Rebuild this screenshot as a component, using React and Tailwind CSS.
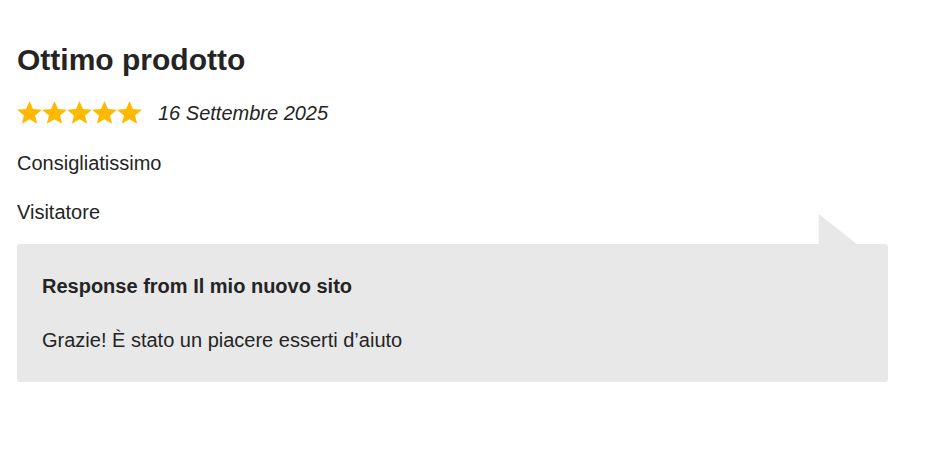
function Star() {
    return (
        <svg width="25" height="23" viewBox="2 0 96 91" preserveAspectRatio="none" className="block">
            <polygon
                fill="#ffb900"
                points="50,0 63.23,31.8 97.55,34.55 71.4,56.95 79.39,90.45 50,72.5 20.61,90.45 28.6,56.95 2.45,34.55 36.77,31.8"
            />
        </svg>
    );
}

export default function App() {
    return (
        <div className="min-h-[453px] bg-white text-[#242424] font-['Liberation_Sans',Arial,sans-serif]">
            <div className="pl-[17px] pt-[42px] w-[888px]">
                <h2 className="text-[30px] leading-[36px] font-bold">Ottimo prodotto</h2>

                <div className="mt-[22px] flex items-center h-[24px]">
                    <div className="flex">
                        {[0, 1, 2, 3, 4].map((i) => (
                            <Star key={i} />
                        ))}
                    </div>
                    <span className="ml-[16px] mt-[2px] text-[20px] leading-[24px] italic">16 Settembre 2025</span>
                </div>

                <p className="mt-[25px] text-[20px] leading-[28px]">Consigliatissimo</p>
                <p className="mt-[21px] text-[20px] leading-[28px]">Visitatore</p>

                {/* Reply bubble */}
                <div className="relative mt-[18px] rounded-[3px] bg-[#e8e8e8] pl-[25px] pt-[28px] pb-[28px]">
                    <svg width="40" height="31" viewBox="0 0 40 31" className="absolute right-[30px] top-[-30px]">
                        <polygon points="0.7,0 0.7,31 40,31" fill="#e8e8e8" />
                    </svg>
                    <h3 className="text-[20px] leading-[28px] font-bold">Response from Il mio nuovo sito</h3>
                    <p className="mt-[26px] text-[20px] leading-[28px]">Grazie! È stato un piacere esserti d’aiuto</p>
                </div>
            </div>
        </div>
    );
}
